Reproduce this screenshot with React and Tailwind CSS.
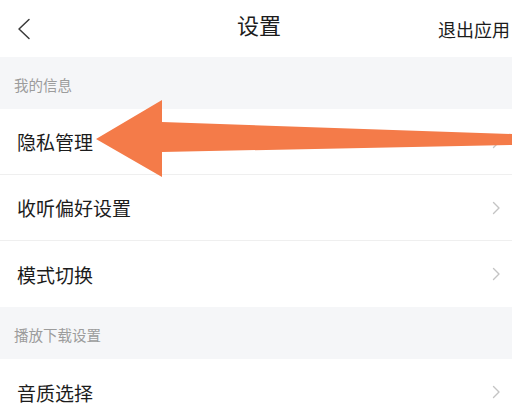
import React from "react";

const font = { fontFamily: '"Noto Sans CJK SC", "Noto Sans", sans-serif' };

function Chevron() {
  return (
    <svg width="9" height="14" viewBox="0 0 9 14" className="shrink-0">
      <polyline
        points="1.5,1.5 7,7 1.5,12.5"
        fill="none"
        stroke="#c4c4c4"
        strokeWidth="1.4"
        strokeLinecap="round"
        strokeLinejoin="round"
      />
    </svg>
  );
}

function Row({ label, last }) {
  return (
    <div
      className={`flex h-[66px] items-center justify-between bg-white pl-[17px] pr-[11px] ${
        last ? "" : "border-b border-[#efefef]"
      }`}
    >
      <span className="text-[19px] leading-none text-[#1c1c1c]">{label}</span>
      <Chevron />
    </div>
  );
}

function Section({ title }) {
  return (
    <div className="flex h-[52px] items-center bg-[#f5f6f8] pl-[14px] pt-[5px]">
      <span className="text-[14.5px] leading-none text-[#9c9c9c]">{title}</span>
    </div>
  );
}

export default function App() {
  return (
    <div className="relative h-[418px] w-[512px] overflow-hidden bg-white" style={font}>
      {/* Header */}
      <div className="relative flex h-[57px] items-center justify-between bg-white pl-[17px] pr-[2px]">
        <svg width="14" height="22" viewBox="0 0 14 22">
          <polyline
            points="12,1.5 2,11 12,20.5"
            fill="none"
            stroke="#3a3a3a"
            strokeWidth="1.5"
            strokeLinecap="round"
            strokeLinejoin="round"
          />
        </svg>
        <span className="absolute left-[237px] top-[13px] text-[22px] leading-none text-[#1c1c1c]">
          设置
        </span>
        <span className="text-[18px] leading-none text-[#1c1c1c]">退出应用</span>
      </div>

      <Section title="我的信息" />
      <Row label="隐私管理" />
      <Row label="收听偏好设置" />
      <Row label="模式切换" last />
      <Section title="播放下载设置" />
      <Row label="音质选择" last />

      {/* annotation arrow */}
      <svg
        className="pointer-events-none absolute left-0 top-0"
        width="512"
        height="418"
        viewBox="0 0 512 418"
      >
        <polygon
          points="96,139 162,100 162,122 512,134 512,145 162,152 162,177"
          fill="#f47b49"
        />
      </svg>
    </div>
  );
}
